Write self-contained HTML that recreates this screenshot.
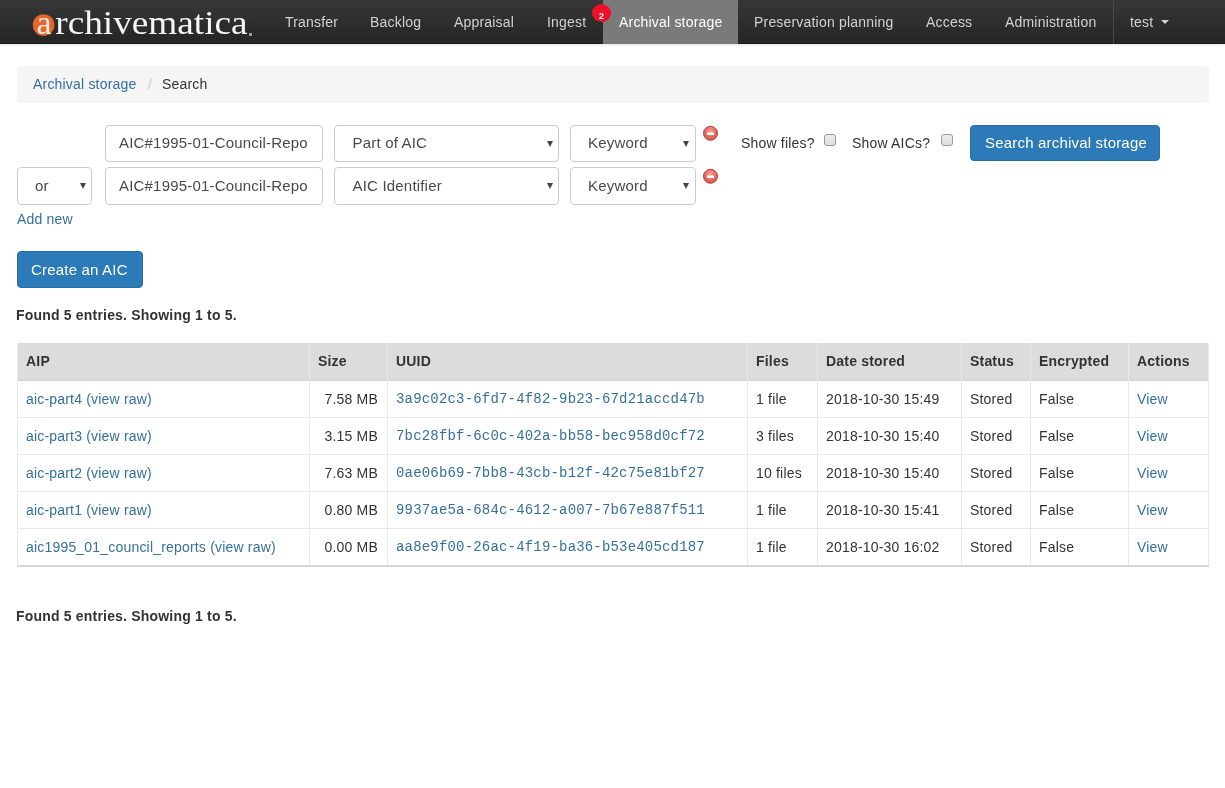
<!DOCTYPE html>
<html><head><meta charset="utf-8"><title>Archival storage</title>
<style>
*{box-sizing:border-box;margin:0;padding:0}
html,body{width:1225px;height:788px;overflow:hidden;background:#fff}
#wrap{position:absolute;left:0;top:0;width:1225px;height:788px;will-change:transform}
body{font-family:"Liberation Sans",sans-serif;font-size:14px;line-height:20px;color:#333;position:relative;letter-spacing:0.19px}
a{color:#35709f;text-decoration:none}
.t{position:absolute;white-space:nowrap;line-height:20px}
/* navbar */
.nav{position:absolute;left:0;top:0;width:1225px;height:44px;background:linear-gradient(to bottom,#373737 0,#252525 100%);border-bottom:1px solid #1a1a1a;box-shadow:0 1px 3px rgba(0,0,0,0.12)}
.nav .it{position:absolute;top:12px;color:#d2d2d2;white-space:nowrap;line-height:20px}
.act{position:absolute;left:603px;top:0;width:135px;height:44px;background:#7a7a7a}
.badge{position:absolute;left:592px;top:4px;width:19px;height:18px;border-radius:50%;background:#ee0f28;color:#fff;font-size:9px;font-weight:bold;line-height:18px;padding-top:3px;text-align:center;letter-spacing:0}
/* breadcrumb */
.bc{position:absolute;left:17px;top:66px;width:1192px;height:37px;background:#f5f5f5;border-radius:4px}
/* form */
.fc{position:absolute;height:37px;border:1px solid #ccc;border-radius:4px;background:#fff;color:#4a4a4a;font-size:15px;white-space:nowrap;overflow:hidden}
.fc .tx{position:absolute;top:7px;line-height:20px}
.arr{position:absolute;width:0;height:0;border-left:3.5px solid transparent;border-right:3.5px solid transparent;border-top:6px solid #444}
.rm{position:absolute;width:15px;height:15px;border-radius:50%;background:radial-gradient(circle at 50% 30%,#f59a90 0,#e5635a 55%,#cf4a42 100%);box-shadow:inset 0 0 0 1px #c9504a}
.rm:after{content:"";position:absolute;left:4px;top:6px;width:7px;height:3px;background:#fff;border-radius:1px}
.cb{position:absolute;width:12px;height:12px;border:1px solid #9a9a9a;border-radius:3px;background:linear-gradient(#ececec,#dedede)}
.btn{position:absolute;background:#2c7ab8;border:1px solid #2a6ea5;border-radius:4px;color:#fff;font-size:15px;white-space:nowrap}
.btn .tx{position:absolute;top:7px;line-height:20px}
/* table */
.tbl{position:absolute;left:17px;top:343px;width:1192px;height:224px}
.hd{position:absolute;left:0;top:0;width:1192px;height:38px;background:#dcdcdc;border-bottom:1px solid #d3d3d3}
.vl{position:absolute;top:0;width:1px;height:222px;background:#e9e9e9}
.hl{position:absolute;left:0;width:1192px;height:1px;background:#e9e9e9}
.cell{position:absolute;white-space:nowrap;line-height:20px}
.mono{font-family:"Liberation Mono",monospace;letter-spacing:0.18px}
.r{text-align:right}
b{font-weight:bold}
</style></head><body><div id="wrap">
<div class="nav">
  <svg style="position:absolute;left:0;top:0" width="270" height="44" viewBox="0 0 270 44">
    <circle cx="43.6" cy="25" r="10.8" fill="#e5672e"/>
    <text x="36.5" y="33.6" font-family="Liberation Serif" font-size="34" fill="#f8ecdc" letter-spacing="0">a</text>
    <text x="55.3" y="33.6" font-family="Liberation Serif" font-size="34" fill="#f6f6f6" textLength="192.3" lengthAdjust="spacingAndGlyphs" letter-spacing="0">rchivematica</text>
    <rect x="249" y="33" width="3" height="3" fill="#9a9a9a"/>
  </svg>
  <div class="act"></div>
  <div class="it" style="left:285px">Transfer</div>
  <div class="it" style="left:370px">Backlog</div>
  <div class="it" style="left:454px">Appraisal</div>
  <div class="it" style="left:547px">Ingest</div>
  <div class="badge">2</div>
  <div class="it" style="left:619px;color:#fff">Archival storage</div>
  <div class="it" style="left:754px">Preservation planning</div>
  <div class="it" style="left:926px">Access</div>
  <div class="it" style="left:1005px">Administration</div>
  <div style="position:absolute;left:1113px;top:0;width:1px;height:44px;background:#4a4a4a"></div>
  <div class="it" style="left:1130px">test</div>
  <div style="position:absolute;left:1161px;top:20px;width:0;height:0;border-left:4px solid transparent;border-right:4px solid transparent;border-top:4px solid #d2d2d2"></div>
</div>

<div class="bc">
  <div class="t" style="left:16px;top:8px"><a href="#">Archival storage</a></div>
  <div class="t" style="left:131px;top:8px;color:#ccc">/</div>
  <div class="t" style="left:145px;top:8px">Search</div>
</div>

<!-- row 1 -->
<div class="fc" style="left:105px;top:125px;width:218px"><div class="tx" style="left:13px;width:189px;overflow:hidden">AIC#1995-01-Council-Reports</div></div>
<div class="fc" style="left:334px;top:125px;width:225px"><div class="tx" style="left:17.5px">Part of AIC</div><div class="arr" style="left:212px;top:15px"></div></div>
<div class="fc" style="left:570px;top:125px;width:126px"><div class="tx" style="left:17px">Keyword</div><div class="arr" style="left:112px;top:15px"></div></div>
<svg style="position:absolute;left:702px;top:125px" width="17" height="17" viewBox="0 0 17 17"><defs><radialGradient id="rg125" cx="50%" cy="35%" r="60%"><stop offset="0" stop-color="#f7a29b"/><stop offset="0.6" stop-color="#ea6f66"/><stop offset="1" stop-color="#dc5249"/></radialGradient></defs><circle cx="8.5" cy="8.3" r="7" fill="url(#rg125)" stroke="#b0443f" stroke-width="1"/><rect x="5" y="7.6" width="7" height="2.3" rx="0.5" fill="#fff"/></svg>
<div class="t" style="left:741px;top:133px">Show files?</div>
<div class="cb" style="left:824px;top:134px"></div>
<div class="t" style="left:852px;top:133px">Show AICs?</div>
<div class="cb" style="left:941px;top:134px"></div>
<div class="btn" style="left:970px;top:125px;width:190px;height:36px"><div class="tx" style="left:14px">Search archival storage</div></div>

<!-- row 2 -->
<div class="fc" style="left:17px;top:167px;width:75px;height:38px"><div class="tx" style="left:17px;top:8px">or</div><div class="arr" style="left:61.5px;top:15px"></div></div>
<div class="fc" style="left:105px;top:167px;width:218px;height:38px"><div class="tx" style="left:13px;top:8px;width:189px;overflow:hidden">AIC#1995-01-Council-Reports</div></div>
<div class="fc" style="left:334px;top:167px;width:225px;height:38px"><div class="tx" style="left:17.5px;top:8px">AIC Identifier</div><div class="arr" style="left:212px;top:15px"></div></div>
<div class="fc" style="left:570px;top:167px;width:126px;height:38px"><div class="tx" style="left:17px;top:8px">Keyword</div><div class="arr" style="left:112px;top:15px"></div></div>
<svg style="position:absolute;left:702px;top:168px" width="17" height="17" viewBox="0 0 17 17"><defs><radialGradient id="rg168" cx="50%" cy="35%" r="60%"><stop offset="0" stop-color="#f7a29b"/><stop offset="0.6" stop-color="#ea6f66"/><stop offset="1" stop-color="#dc5249"/></radialGradient></defs><circle cx="8.5" cy="8.3" r="7" fill="url(#rg168)" stroke="#b0443f" stroke-width="1"/><rect x="5" y="7.6" width="7" height="2.3" rx="0.5" fill="#fff"/></svg>

<div class="t" style="left:17px;top:209px"><a href="#">Add new</a></div>

<div class="btn" style="left:17px;top:251px;width:126px;height:37px"><div class="tx" style="left:13px;top:8px">Create an AIC</div></div>

<div class="t" style="left:16px;top:305px"><b>Found 5 entries. Showing 1 to 5.</b></div>

<div class="tbl">
  <div class="hd"></div>
  <div class="hl" style="top:74px"></div>
  <div class="hl" style="top:111px"></div>
  <div class="hl" style="top:148px"></div>
  <div class="hl" style="top:185px"></div>
  <div style="position:absolute;left:0;top:222px;width:1192px;height:2px;background:#d6d6d6"></div>
  <div class="vl" style="left:0"></div>
  <div class="vl" style="left:292px"></div>
  <div class="vl" style="left:370px"></div>
  <div class="vl" style="left:730px"></div>
  <div class="vl" style="left:800px"></div>
  <div class="vl" style="left:944px"></div>
  <div class="vl" style="left:1013px"></div>
  <div class="vl" style="left:1111px"></div>
  <div class="vl" style="left:1191px"></div>
  <!-- header -->
  <div class="cell" style="left:9px;top:8px"><b>AIP</b></div>
  <div class="cell" style="left:301px;top:8px"><b>Size</b></div>
  <div class="cell" style="left:379px;top:8px"><b>UUID</b></div>
  <div class="cell" style="left:739px;top:8px"><b>Files</b></div>
  <div class="cell" style="left:809px;top:8px"><b>Date stored</b></div>
  <div class="cell" style="left:953px;top:8px"><b>Status</b></div>
  <div class="cell" style="left:1022px;top:8px"><b>Encrypted</b></div>
  <div class="cell" style="left:1120px;top:8px"><b>Actions</b></div>
  <div class="cell" style="left:9px;top:46px"><a href="#">aic-part4 (view raw)</a></div>
  <div class="cell r" style="left:292px;width:69px;top:46px">7.58 MB</div>
  <div class="cell mono" style="left:379px;top:46px"><a href="#">3a9c02c3-6fd7-4f82-9b23-67d21accd47b</a></div>
  <div class="cell" style="left:739px;top:46px">1 file</div>
  <div class="cell" style="left:809px;top:46px">2018-10-30 15:49</div>
  <div class="cell" style="left:953px;top:46px">Stored</div>
  <div class="cell" style="left:1022px;top:46px">False</div>
  <div class="cell" style="left:1120px;top:46px"><a href="#">View</a></div>
  <div class="cell" style="left:9px;top:83px"><a href="#">aic-part3 (view raw)</a></div>
  <div class="cell r" style="left:292px;width:69px;top:83px">3.15 MB</div>
  <div class="cell mono" style="left:379px;top:83px"><a href="#">7bc28fbf-6c0c-402a-bb58-bec958d0cf72</a></div>
  <div class="cell" style="left:739px;top:83px">3 files</div>
  <div class="cell" style="left:809px;top:83px">2018-10-30 15:40</div>
  <div class="cell" style="left:953px;top:83px">Stored</div>
  <div class="cell" style="left:1022px;top:83px">False</div>
  <div class="cell" style="left:1120px;top:83px"><a href="#">View</a></div>
  <div class="cell" style="left:9px;top:120px"><a href="#">aic-part2 (view raw)</a></div>
  <div class="cell r" style="left:292px;width:69px;top:120px">7.63 MB</div>
  <div class="cell mono" style="left:379px;top:120px"><a href="#">0ae06b69-7bb8-43cb-b12f-42c75e81bf27</a></div>
  <div class="cell" style="left:739px;top:120px">10 files</div>
  <div class="cell" style="left:809px;top:120px">2018-10-30 15:40</div>
  <div class="cell" style="left:953px;top:120px">Stored</div>
  <div class="cell" style="left:1022px;top:120px">False</div>
  <div class="cell" style="left:1120px;top:120px"><a href="#">View</a></div>
  <div class="cell" style="left:9px;top:157px"><a href="#">aic-part1 (view raw)</a></div>
  <div class="cell r" style="left:292px;width:69px;top:157px">0.80 MB</div>
  <div class="cell mono" style="left:379px;top:157px"><a href="#">9937ae5a-684c-4612-a007-7b67e887f511</a></div>
  <div class="cell" style="left:739px;top:157px">1 file</div>
  <div class="cell" style="left:809px;top:157px">2018-10-30 15:41</div>
  <div class="cell" style="left:953px;top:157px">Stored</div>
  <div class="cell" style="left:1022px;top:157px">False</div>
  <div class="cell" style="left:1120px;top:157px"><a href="#">View</a></div>
  <div class="cell" style="left:9px;top:194px"><a href="#">aic1995_01_council_reports (view raw)</a></div>
  <div class="cell r" style="left:292px;width:69px;top:194px">0.00 MB</div>
  <div class="cell mono" style="left:379px;top:194px"><a href="#">aa8e9f00-26ac-4f19-ba36-b53e405cd187</a></div>
  <div class="cell" style="left:739px;top:194px">1 file</div>
  <div class="cell" style="left:809px;top:194px">2018-10-30 16:02</div>
  <div class="cell" style="left:953px;top:194px">Stored</div>
  <div class="cell" style="left:1022px;top:194px">False</div>
  <div class="cell" style="left:1120px;top:194px"><a href="#">View</a></div>
</div>

<div class="t" style="left:16px;top:606px"><b>Found 5 entries. Showing 1 to 5.</b></div>
</div></body></html>
